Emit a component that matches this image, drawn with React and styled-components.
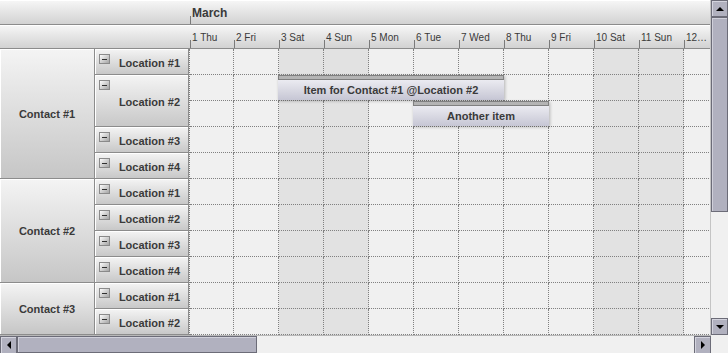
import React from 'react'
import styled, { createGlobalStyle } from 'styled-components'

const GlobalStyle = createGlobalStyle`
html, body {
  margin:0;
  padding:0;
  background:#f0f0f0;
}
body {
  font-family:"Liberation Sans", Arial, sans-serif;
  color:#333;
}
`

const DAY_W = 45
const FIRST_W = 44
const ROW_H = 26

const days = ['1 Thu', '2 Fri', '3 Sat', '4 Sun', '5 Mon', '6 Tue', '7 Wed', '8 Thu', '9 Fri', '10 Sat', '11 Sun', '12\u2026']
const weekend = [2, 3, 9, 10]

const contacts = [
    { name: 'Contact #1', locations: [['Location #1', 1], ['Location #2', 2], ['Location #3', 1], ['Location #4', 1]] },
    { name: 'Contact #2', locations: [['Location #1', 1], ['Location #2', 1], ['Location #3', 1], ['Location #4', 1]] },
    { name: 'Contact #3', locations: [['Location #1', 1], ['Location #2', 1]] },
]

const items = [
    { text: 'Item for Contact #1 @Location #2', day: 2, span: 5, row: 1 },
    { text: 'Another item', day: 5, span: 3, row: 2 },
]

const ROWS = 11

// left edge of a day inside the grid, the first column is a pixel narrower
const dayLeft = (d) => FIRST_W - 1 + (d - 1) * DAY_W

function Triangle({ dir }) {
    const pts = {
        up: '1,7 5,3 9,7',
        down: '1,3 5,7 9,3',
        left: '7,1 3,5 7,9',
        right: '3,1 7,5 3,9',
    }
    return (
        <svg width="10" height="10" viewBox="0 0 10 10">
            <polygon points={pts[dir]} fill="#000" />
        </svg>
    )
}

function App() {
    return (
        <Frame>
            <GlobalStyle />
            <Main>
                <HeaderRow $h={25}>
                    <Spacer />
                    <MonthHead>
                        <Tick $h={8} />
                        <MonthLabel>March</MonthLabel>
                    </MonthHead>
                </HeaderRow>
                <HeaderRow $h={24}>
                    <Spacer />
                    {days.map((d, i) => (
                        <DayHead key={i} $w={i === 0 ? FIRST_W : DAY_W}>
                            <Tick $h={8} />
                            <DayLabel>{d}</DayLabel>
                        </DayHead>
                    ))}
                </HeaderRow>
                <Body>
                    <RowHeaders>
                        {contacts.map((c) => (
                            <ContactGroup key={c.name}>
                                <ContactCell>{c.name}</ContactCell>
                                <LocationList>
                                    {c.locations.map(([name, rows]) => (
                                        <LocationCell key={name} $rows={rows}>
                                            <Toggle />
                                            <LocationLabel>{name}</LocationLabel>
                                        </LocationCell>
                                    ))}
                                </LocationList>
                            </ContactGroup>
                        ))}
                    </RowHeaders>
                    <Grid>
                        {Array.from({ length: ROWS }).map((_, r) => (
                            <GridRow key={r}>
                                {days.map((d, i) => (
                                    <Cell key={i} $w={i === 0 ? FIRST_W : DAY_W} $weekend={weekend.includes(i)} />
                                ))}
                            </GridRow>
                        ))}
                        {items.map((it) => (
                            <Item
                                key={it.text}
                                style={{
                                    left: dayLeft(it.day),
                                    width: it.span * DAY_W + 1,
                                    top: it.row * ROW_H,
                                }}
                            >
                                <ItemBar />
                                <ItemBody>{it.text}</ItemBody>
                            </Item>
                        ))}
                    </Grid>
                </Body>
            </Main>
            <VScroll>
                <ScrollBtn $w={17} $h={17}><Triangle dir="up" /></ScrollBtn>
                <VThumb />
                <Track />
                <ScrollBtn $w={17} $h={17}><Triangle dir="down" /></ScrollBtn>
            </VScroll>
            <HScroll>
                <ScrollBtn $w={17} $h={18}><Triangle dir="left" /></ScrollBtn>
                <HThumb />
                <Track />
                <ScrollBtn $w={17} $h={18}><Triangle dir="right" /></ScrollBtn>
            </HScroll>
            <Corner />
        </Frame>
    )
}

export default App

const Frame = styled.div`
width:728px;
height:353px;
display:grid;
grid-template-columns:711px 17px;
grid-template-rows:335px 18px;
background:#f0f0f0;
overflow:hidden;
`
const Main = styled.div`
box-sizing:border-box;
border-right:1px solid #c4c4c4;
display:flex;
flex-direction:column;
overflow:hidden;
min-width:0;
`
const HeaderRow = styled.div`
box-sizing:border-box;
height:${p => p.$h}px;
flex-shrink:0;
display:flex;
border-bottom:1px solid #8c8c8c;
background:linear-gradient(#f7f7f7, #d2d2d2);
box-shadow:inset 0 1px 0 #fff;
overflow:hidden;
`
const Spacer = styled.div`
width:190px;
flex-shrink:0;
`
const MonthHead = styled.div`
display:flex;
align-items:flex-end;
`
const Tick = styled.div`
width:1px;
height:${p => p.$h}px;
background:#7a7a7a;
flex-shrink:0;
`
const MonthLabel = styled.div`
align-self:flex-start;
margin-top:5px;
margin-left:1px;
font-size:12px;
font-weight:bold;
line-height:16px;
color:#3a3a3a;
`
const DayHead = styled.div`
width:${p => p.$w}px;
flex-shrink:0;
display:flex;
align-items:flex-end;
overflow:hidden;
`
const DayLabel = styled.div`
align-self:flex-start;
margin-top:6px;
margin-left:1px;
font-size:10px;
line-height:13px;
color:#3a3a3a;
white-space:nowrap;
`
const Body = styled.div`
display:flex;
flex:1;
overflow:hidden;
`
const RowHeaders = styled.div`
width:189px;
flex-shrink:0;
display:flex;
flex-direction:column;
`
const ContactGroup = styled.div`
display:flex;
`
const ContactCell = styled.div`
box-sizing:border-box;
width:95px;
flex-shrink:0;
display:flex;
align-items:center;
justify-content:center;
border-right:1px solid #8c8c8c;
border-bottom:1px solid #8c8c8c;
box-shadow:inset 1px 1px 0 #fff;
background:linear-gradient(#f4f4f4, #c6c6c6);
font-size:11px;
font-weight:bold;
color:#3a3a3a;
`
const LocationList = styled.div`
display:flex;
flex-direction:column;
flex:1;
`
const LocationCell = styled.div`
box-sizing:border-box;
height:${p => p.$rows * ROW_H}px;
display:grid;
grid-template-columns:auto 1fr;
padding:5px 8px 0 4px;
border-right:1px solid #8c8c8c;
border-bottom:1px solid #8c8c8c;
box-shadow:inset 1px 1px 0 #fff;
background:linear-gradient(#f4f4f4, #c8c8c8);
`
const Toggle = styled.div`
box-sizing:border-box;
width:11px;
height:10px;
align-self:start;
display:flex;
align-items:center;
justify-content:center;
border:1px solid #8a8a8a;
background:linear-gradient(135deg, #fcfcfc, #a4a4a4);
&::after{
  content:'';
  width:5px;
  height:1px;
  background:#303030;
}
`
const LocationLabel = styled.div`
align-self:center;
margin-top:-3px;
text-align:right;
font-size:11px;
font-weight:bold;
color:#3a3a3a;
white-space:nowrap;
`
const Grid = styled.div`
position:relative;
flex:1;
display:flex;
flex-direction:column;
border-left:1px dotted #808080;
overflow:hidden;
`
const GridRow = styled.div`
display:flex;
flex-shrink:0;
`
const Cell = styled.div`
box-sizing:border-box;
width:${p => p.$w}px;
height:${ROW_H}px;
flex-shrink:0;
border-right:1px dotted #808080;
border-bottom:1px dotted #808080;
background:${p => (p.$weekend ? '#e2e2e2' : '#f0f0f0')};
`
const Item = styled.div`
position:absolute;
height:25px;
display:flex;
flex-direction:column;
box-shadow:1px 1px 3px rgba(0,0,0,0.25);
`
const ItemBar = styled.div`
box-sizing:border-box;
height:5px;
border:1px solid #808080;
background:#b4b4b4;
`
const ItemBody = styled.div`
flex:1;
display:flex;
align-items:center;
justify-content:center;
background:linear-gradient(#ebebf1, #c6c6d4);
font-size:11px;
font-weight:bold;
color:#3a3a3a;
white-space:nowrap;
`
const VScroll = styled.div`
display:flex;
flex-direction:column;
background:#f0f0f0;
`
const HScroll = styled.div`
display:flex;
background:#f0f0f0;
border-top:1px solid #b8b8b8;
box-sizing:border-box;
`
const ScrollBtn = styled.div`
box-sizing:border-box;
width:${p => p.$w}px;
height:${p => p.$h}px;
flex-shrink:0;
display:flex;
align-items:center;
justify-content:center;
background:#b1b1bf;
border:1px solid #6c6c78;
box-shadow:inset 1px 1px 0 #d4d4de;
`
const VThumb = styled.div`
box-sizing:border-box;
height:195px;
flex-shrink:0;
background:#b1b1bf;
border:1px solid #6c6c78;
box-shadow:inset 1px 1px 0 #d0d0da;
`
const HThumb = styled.div`
box-sizing:border-box;
width:240px;
flex-shrink:0;
background:#b1b1bf;
border:1px solid #6c6c78;
box-shadow:inset 1px 1px 0 #d0d0da;
`
const Track = styled.div`
flex:1;
`
const Corner = styled.div`
background:#f0f0f0;
`
